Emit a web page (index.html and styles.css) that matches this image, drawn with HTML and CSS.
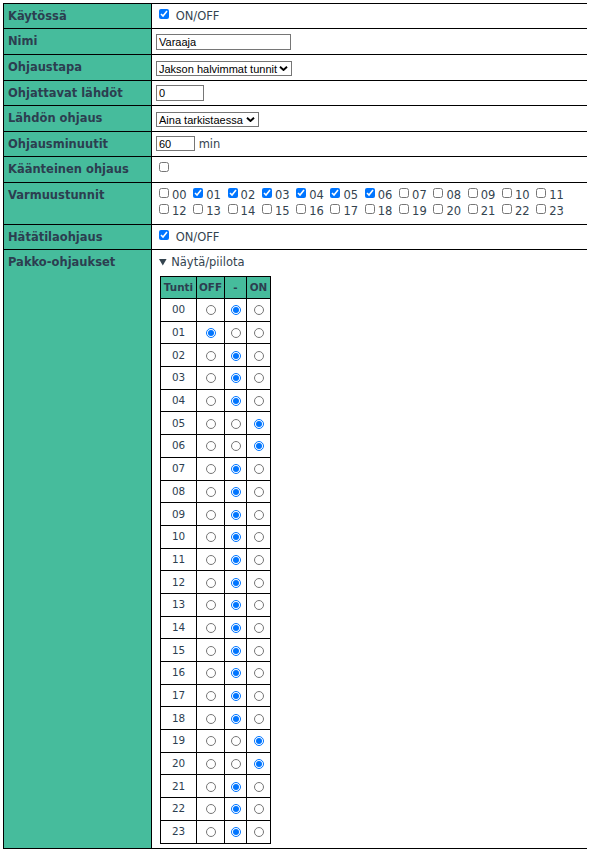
FILE: index.html
```html
<!DOCTYPE html>
<html lang="fi">
<head>
<meta charset="utf-8">
<title>Ohjaus</title>
<link rel="stylesheet" href="styles.css">
</head>
<body>
<table class="settings">
  <tr class="row">
    <th class="label">Käytössä</th>
    <td class="value"><input type="checkbox" class="cb" checked> ON/OFF</td>
  </tr>
  <tr class="row tall">
    <th class="label">Nimi</th>
    <td class="value"><input type="text" class="text name" value="Varaaja"></td>
  </tr>
  <tr class="row tall">
    <th class="label">Ohjaustapa</th>
    <td class="value"><span class="select-wrap"><select class="sel sel-wide"><option>Jakson halvimmat tunnit</option></select><svg class="chev" viewBox="0 0 9 5" aria-hidden="true"><polyline points="1,0.8 4.5,4 8,0.8" fill="none" stroke="#000" stroke-width="1.9"/></svg></span></td>
  </tr>
  <tr class="row">
    <th class="label">Ohjattavat lähdöt</th>
    <td class="value"><input type="text" class="text outputs" value="0"></td>
  </tr>
  <tr class="row tall">
    <th class="label">Lähdön ohjaus</th>
    <td class="value"><span class="select-wrap"><select class="sel sel-short"><option>Aina tarkistaessa</option></select><svg class="chev" viewBox="0 0 9 5" aria-hidden="true"><polyline points="1,0.8 4.5,4 8,0.8" fill="none" stroke="#000" stroke-width="1.9"/></svg></span></td>
  </tr>
  <tr class="row">
    <th class="label">Ohjausminuutit</th>
    <td class="value"><input type="text" class="text minutes" value="60"> min</td>
  </tr>
  <tr class="row tall">
    <th class="label">Käänteinen ohjaus</th>
    <td class="value"><input type="checkbox" class="cb"></td>
  </tr>
  <tr class="row-hours">
    <th class="label">Varmuustunnit</th>
    <td class="value hours"><label class="hour"><input type="checkbox" class="cb">00</label> <label class="hour"><input type="checkbox" class="cb" checked>01</label> <label class="hour"><input type="checkbox" class="cb" checked>02</label> <label class="hour"><input type="checkbox" class="cb" checked>03</label> <label class="hour"><input type="checkbox" class="cb" checked>04</label> <label class="hour"><input type="checkbox" class="cb" checked>05</label> <label class="hour"><input type="checkbox" class="cb" checked>06</label> <label class="hour"><input type="checkbox" class="cb">07</label> <label class="hour"><input type="checkbox" class="cb">08</label> <label class="hour"><input type="checkbox" class="cb">09</label> <label class="hour"><input type="checkbox" class="cb">10</label> <label class="hour"><input type="checkbox" class="cb">11</label> <label class="hour"><input type="checkbox" class="cb">12</label> <label class="hour"><input type="checkbox" class="cb">13</label> <label class="hour"><input type="checkbox" class="cb">14</label> <label class="hour"><input type="checkbox" class="cb">15</label> <label class="hour"><input type="checkbox" class="cb">16</label> <label class="hour"><input type="checkbox" class="cb">17</label> <label class="hour"><input type="checkbox" class="cb">18</label> <label class="hour"><input type="checkbox" class="cb">19</label> <label class="hour"><input type="checkbox" class="cb">20</label> <label class="hour"><input type="checkbox" class="cb">21</label> <label class="hour"><input type="checkbox" class="cb">22</label> <label class="hour"><input type="checkbox" class="cb">23</label></td>
  </tr>
  <tr class="row">
    <th class="label">Hätätilaohjaus</th>
    <td class="value"><input type="checkbox" class="cb" checked> ON/OFF</td>
  </tr>
  <tr>
    <th class="label">Pakko-ohjaukset</th>
    <td class="value forced">
      <details open>
        <summary>Näytä/piilota</summary>
        <table class="pakko">
          <tr class="head"><th class="c-hour">Tunti</th><th class="c-off">OFF</th><th class="c-mid">-</th><th class="c-on">ON</th></tr>
          <tr><td>00</td><td><input type="radio" name="h00"></td><td><input type="radio" name="h00" checked></td><td><input type="radio" name="h00"></td></tr>
          <tr><td>01</td><td><input type="radio" name="h01" checked></td><td><input type="radio" name="h01"></td><td><input type="radio" name="h01"></td></tr>
          <tr><td>02</td><td><input type="radio" name="h02"></td><td><input type="radio" name="h02" checked></td><td><input type="radio" name="h02"></td></tr>
          <tr><td>03</td><td><input type="radio" name="h03"></td><td><input type="radio" name="h03" checked></td><td><input type="radio" name="h03"></td></tr>
          <tr><td>04</td><td><input type="radio" name="h04"></td><td><input type="radio" name="h04" checked></td><td><input type="radio" name="h04"></td></tr>
          <tr><td>05</td><td><input type="radio" name="h05"></td><td><input type="radio" name="h05"></td><td><input type="radio" name="h05" checked></td></tr>
          <tr><td>06</td><td><input type="radio" name="h06"></td><td><input type="radio" name="h06"></td><td><input type="radio" name="h06" checked></td></tr>
          <tr><td>07</td><td><input type="radio" name="h07"></td><td><input type="radio" name="h07" checked></td><td><input type="radio" name="h07"></td></tr>
          <tr><td>08</td><td><input type="radio" name="h08"></td><td><input type="radio" name="h08" checked></td><td><input type="radio" name="h08"></td></tr>
          <tr><td>09</td><td><input type="radio" name="h09"></td><td><input type="radio" name="h09" checked></td><td><input type="radio" name="h09"></td></tr>
          <tr><td>10</td><td><input type="radio" name="h10"></td><td><input type="radio" name="h10" checked></td><td><input type="radio" name="h10"></td></tr>
          <tr><td>11</td><td><input type="radio" name="h11"></td><td><input type="radio" name="h11" checked></td><td><input type="radio" name="h11"></td></tr>
          <tr><td>12</td><td><input type="radio" name="h12"></td><td><input type="radio" name="h12" checked></td><td><input type="radio" name="h12"></td></tr>
          <tr><td>13</td><td><input type="radio" name="h13"></td><td><input type="radio" name="h13" checked></td><td><input type="radio" name="h13"></td></tr>
          <tr><td>14</td><td><input type="radio" name="h14"></td><td><input type="radio" name="h14" checked></td><td><input type="radio" name="h14"></td></tr>
          <tr><td>15</td><td><input type="radio" name="h15"></td><td><input type="radio" name="h15" checked></td><td><input type="radio" name="h15"></td></tr>
          <tr><td>16</td><td><input type="radio" name="h16"></td><td><input type="radio" name="h16" checked></td><td><input type="radio" name="h16"></td></tr>
          <tr><td>17</td><td><input type="radio" name="h17"></td><td><input type="radio" name="h17" checked></td><td><input type="radio" name="h17"></td></tr>
          <tr><td>18</td><td><input type="radio" name="h18"></td><td><input type="radio" name="h18" checked></td><td><input type="radio" name="h18"></td></tr>
          <tr><td>19</td><td><input type="radio" name="h19"></td><td><input type="radio" name="h19"></td><td><input type="radio" name="h19" checked></td></tr>
          <tr><td>20</td><td><input type="radio" name="h20"></td><td><input type="radio" name="h20"></td><td><input type="radio" name="h20" checked></td></tr>
          <tr><td>21</td><td><input type="radio" name="h21"></td><td><input type="radio" name="h21" checked></td><td><input type="radio" name="h21"></td></tr>
          <tr><td>22</td><td><input type="radio" name="h22"></td><td><input type="radio" name="h22" checked></td><td><input type="radio" name="h22"></td></tr>
          <tr><td>23</td><td><input type="radio" name="h23"></td><td><input type="radio" name="h23" checked></td><td><input type="radio" name="h23"></td></tr>
        </table>
      </details>
    </td>
  </tr>
</table>
</body>
</html>
```

FILE: styles.css
```css
body {
  margin: 3px;
  font-family: "DejaVu Sans", Verdana, sans-serif;
  font-size: 11.5px;
  color: #2c3e50;
  background: #fff;
}

.settings {
  border-collapse: collapse;
  width: 585px;
}

.settings > tbody > tr > th,
.settings > tbody > tr > td {
  border: 1px solid #000;
  padding: 4px 4px;
  line-height: 16px;
  vertical-align: top;
}

.settings .row {
  height: 25px;
}

.settings .row.tall {
  height: 26px;
}

.settings .row-hours {
  height: 42px;
}

.label {
  width: 139px;
  text-align: left;
  font-weight: bold;
  background: #46bc9c;
  color: #2c3e50;
}

.value {
  background: #fff;
  color: #34444f;
}

.cb {
  width: 10px;
  height: 10px;
  margin: 0 3px;
  vertical-align: 1px;
}

.text {
  font-family: "Liberation Sans", Arial, sans-serif;
  font-size: 11px;
  color: #000;
  border: 1px solid #767676;
  border-radius: 0;
  padding: 0 2px;
  height: 16px;
  box-sizing: border-box;
  vertical-align: top;
  margin: 0;
}

.name { width: 135px; margin-top: 1px; }
.outputs { width: 48px; }
.minutes { width: 39px; height: 15px; }

.select-wrap {
  position: relative;
  display: inline-block;
  vertical-align: top;
  margin-top: 2px;
}

.sel {
  display: block;
  appearance: none;
  -webkit-appearance: none;
  font-family: "Liberation Sans", Arial, sans-serif;
  font-size: 11px;
  line-height: 12px;
  color: #000;
  height: 15px;
  padding: 0 12px 0 2px;
  margin: 0;
  border: 1px solid #767676;
  border-radius: 0;
  box-sizing: border-box;
  background: #fff;
}

.sel-wide { width: 136px; }
.sel-short { width: 103px; }

.chev {
  position: absolute;
  right: 4px;
  top: 5px;
  width: 9px;
  height: 5px;
  pointer-events: none;
}

.hour {
  white-space: nowrap;
}

.forced {
  padding-bottom: 4px;
}

.forced summary {
  cursor: pointer;
  padding-left: 3px;
}

.pakko {
  border-collapse: collapse;
  margin: 6px 0 0 4px;
  font-size: 10.4px;
  line-height: 13px;
}

.pakko th,
.pakko td {
  border: 1px solid #000;
  text-align: center;
  padding: 0 2px;
}

.pakko .head {
  height: 22px;
}

.pakko th {
  background: #46bc9c;
  color: #2c3e50;
  font-weight: bold;
}

.pakko tr {
  height: 22.7px;
}

.pakko td {
  color: #2c3e50;
}

.c-hour { width: 31px; }
.c-off { width: 23px; }
.c-mid { width: 17px; }
.c-on { width: 19px; }

.pakko input[type="radio"] {
  width: 10px;
  height: 10px;
  margin: 0;
  vertical-align: middle;
}
```
